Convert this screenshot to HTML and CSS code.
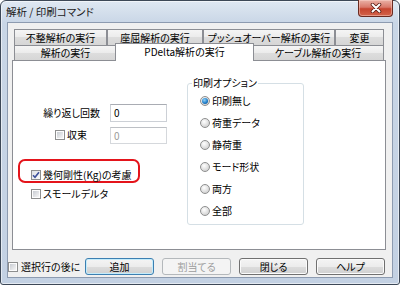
FILE: index.html
```html
<!DOCTYPE html>
<html lang="ja">
<head>
<meta charset="utf-8">
<title>解析 / 印刷コマンド</title>
<link rel="stylesheet" href="styles.css">
</head>
<body>
<div class="window">
  <div class="titlebar">
    <span class="title">解析 / 印刷コマンド</span>
    <div class="close">
      <svg width="14" height="10" viewBox="0 0 14 10">
        <path d="M3.5 1.5 L10.5 8.5 M10.5 1.5 L3.5 8.5" stroke="#5b1d14" stroke-width="3.6" stroke-linecap="round"/>
        <path d="M3.5 1.5 L10.5 8.5 M10.5 1.5 L3.5 8.5" stroke="#ffffff" stroke-width="2" stroke-linecap="round"/>
      </svg>
    </div>
  </div>
  <div class="client">
    <div class="tabctl">
      <div class="tabrow row1">
        <div class="tab t-fusei">不整解析の実行</div>
        <div class="tab t-zakutsu">座屈解析の実行</div>
        <div class="tab t-push">プッシュオーバー解析の実行</div>
        <div class="tab t-henko">変更</div>
      </div>
      <div class="tabrow row2">
        <div class="tab t-kaiseki">解析の実行</div>
        <div class="tab t-pdelta selected">PDelta解析の実行</div>
        <div class="tab t-cable">ケーブル解析の実行</div>
      </div>
      <div class="panel">
        <div class="leftcol">
          <div class="formrow">
            <span class="fieldlabel">繰り返し回数</span>
            <div class="tb">0</div>
          </div>
          <div class="formrow second">
            <span class="fieldlabel left">
              <span class="chk"><span class="cb"></span>収束</span>
            </span>
            <div class="tb disabled">0</div>
          </div>
          <div class="highlight">
            <span class="chk"><span class="cb checked"><svg width="8" height="8" viewBox="0 0 8 8"><path d="M1 4.2 L3 6.3 L7 1.2" fill="none" stroke="#3d519b" stroke-width="1.6"/></svg></span>幾何剛性(Kg)の考慮</span>
          </div>
          <div class="smallrow">
            <span class="chk"><span class="cb"></span>スモールデルタ</span>
          </div>
        </div>
        <div class="group">
          <span class="legend">印刷オプション</span>
          <div class="radios">
            <div class="radio"><span class="rb on"></span>印刷無し</div>
            <div class="radio"><span class="rb"></span>荷重データ</div>
            <div class="radio"><span class="rb"></span>静荷重</div>
            <div class="radio"><span class="rb"></span>モード形状</div>
            <div class="radio"><span class="rb"></span>両方</div>
            <div class="radio"><span class="rb"></span>全部</div>
          </div>
        </div>
      </div>
    </div>
    <div class="bottombar">
      <span class="chk after"><span class="cb"></span>選択行の後に</span>
      <div class="buttons">
        <div class="btn default">追加</div>
        <div class="btn disabled">割当てる</div>
        <div class="btn">閉じる</div>
        <div class="btn">ヘルプ</div>
      </div>
    </div>
  </div>
</div>
</body>
</html>
```

FILE: styles.css
```css
* { box-sizing: border-box; }
html, body { margin: 0; padding: 0; }
body {
  width: 400px;
  height: 285px;
  overflow: hidden;
  background: #ffffff;
  font-family: "Noto Sans CJK JP", "Noto Sans", sans-serif;
  font-size: 10px;
  line-height: 12px;
  color: #000;
  font-feature-settings: "palt";
}

.window {
  width: 400px;
  height: 285px;
  border: 1px solid #3d4857;
  border-radius: 6px 6px 3px 3px;
  background: linear-gradient(#dfe8f2, #c9d6e6 22px, #c3d1e3);
  box-shadow: inset 0 0 0 1px rgba(255,255,255,0.55);
  padding: 0 6px 6px 6px;
  display: flex;
  flex-direction: column;
}

.titlebar {
  height: 21px;
  display: flex;
  align-items: flex-start;
}
.title {
  margin-left: -1px;
  margin-top: 5px;
  font-size: 10.5px;
  line-height: 12px;
  color: #1a1a1a;
}
.close {
  margin-left: auto;
  margin-top: -1px;
  width: 35px;
  height: 17px;
  border: 1px solid #6a2a20;
  border-top: none;
  border-radius: 0 0 4px 4px;
  background: linear-gradient(#eab2a6, #d9796a 45%, #c6452f 55%, #d2634a);
  box-shadow: inset 0 0 0 1px rgba(255,220,210,0.45);
  display: flex;
  align-items: center;
  justify-content: center;
}

.client {
  flex: 1;
  border: 1px solid #8d9bb0;
  background: #f0f0f0;
  padding-top: 6px;
  display: flex;
  flex-direction: column;
}

.tabctl {
  margin-left: 4px;
  width: 374px;
}
.tabrow {
  display: flex;
  margin-left: 2px;
}
.tab {
  border: 1px solid #8c8e94;
  border-bottom: none;
  background: linear-gradient(#f5f5f5, #ebebeb 50%, #dddddd 50%, #d6d6d6);
  display: flex;
  align-items: center;
  justify-content: center;
  white-space: nowrap;
}
.row1 .tab { height: 16px; }
.row2 .tab { height: 15px; }
.t-fusei { width: 93px; }
.t-zakutsu { width: 96px; }
.t-push { width: 132px; }
.t-henko { width: 49px; }
.t-kaiseki { width: 103px; }
.t-pdelta { width: 135px; }
.t-cable { width: 132px; }
.tab.selected {
  width: 139px;
  height: 18px;
  margin: -2px -2px -1px -2px;
  background: #ffffff;
  position: relative;
  z-index: 1;
  padding-bottom: 2px;
}

.panel {
  height: 190px;
  border: 1px solid #8c8e94;
  background: #ffffff;
  display: flex;
}

.leftcol {
  width: 174px;
  padding-top: 43px;
}
.formrow {
  display: flex;
  align-items: center;
}
.formrow.second { margin-top: 5px; }
.fieldlabel {
  width: 97px;
  padding-right: 10px;
  text-align: right;
}
.fieldlabel.left {
  text-align: left;
  padding-left: 42px;
  padding-right: 0;
}
.tb {
  width: 57px;
  height: 18px;
  border: 1px solid #ccd0d6;
  border-top-color: #a9acb3;
  background: #ffffff;
  padding: 1px 3px;
  line-height: 14px;
}
.tb.disabled {
  height: 17px;
  color: #9a9a9a;
  border-color: #d5d8dc;
  border-top-color: #bdc0c5;
}

.chk {
  display: inline-flex;
  align-items: center;
  gap: 2px;
  white-space: nowrap;
}
.cb {
  width: 10px;
  height: 10px;
  border: 1px solid #8e8f8f;
  padding: 1px;
  background: linear-gradient(135deg, #c8ccd2, #f6f6f6) content-box, #fdfdfd;
  display: flex;
  align-items: center;
  justify-content: center;
  flex: none;
}
.cb.checked { padding: 0; background: linear-gradient(135deg, #dfe2e6, #fafafa); }

.highlight {
  margin-top: 15px;
  margin-left: 5px;
  width: 122px;
  height: 24px;
  border: 2px solid #e4141b;
  border-radius: 7px;
  padding: 8px 0 0 11px;
}
.smallrow {
  margin-top: 5px;
  margin-left: 18px;
  height: 12px;
  display: flex;
  align-items: center;
}

.group {
  margin-top: 22px;
  width: 117px;
  height: 142px;
  border: 1px solid #d5dfe5;
  border-radius: 3px;
  position: relative;
}
.legend {
  position: absolute;
  top: -7px;
  left: 4px;
  padding: 0 1px;
  background: #ffffff;
  white-space: nowrap;
}
.radios {
  padding: 6px 0 0 12px;
}
.radio {
  height: 22px;
  display: flex;
  align-items: center;
  gap: 2px;
}
.rb {
  width: 10px;
  height: 10px;
  border-radius: 50%;
  border: 1px solid #8e8f8f;
  background: radial-gradient(circle at 40% 35%, #ffffff, #d6d6d6 70%, #c4c4c4);
  display: flex;
  align-items: center;
  justify-content: center;
  flex: none;
}
.rb.on::after {
  content: "";
  width: 6px;
  height: 6px;
  border-radius: 50%;
  background: radial-gradient(circle at 40% 35%, #8fd3fb, #1b78c4 60%, #0b3f7a);
}

.bottombar {
  margin-top: 8px;
  height: 17px;
  display: flex;
  align-items: center;
}
.chk.after { gap: 3px; }
.buttons {
  margin-left: auto;
  margin-right: 7px;
  display: flex;
  gap: 8px;
}
.btn {
  width: 69px;
  height: 17px;
  border: 1px solid #707070;
  border-radius: 3px;
  background: linear-gradient(#f4f4f4, #ececec 50%, #dddddd 50%, #d0d0d0);
  box-shadow: inset 0 0 0 1px #fbfbfb;
  display: flex;
  align-items: center;
  justify-content: center;
}
.btn.default {
  border-color: #3c7fb1;
  box-shadow: inset 0 0 0 1px #c4ecfb;
}
.btn.disabled {
  border-color: #b4b8bb;
  background: #f4f4f4;
  box-shadow: none;
  color: #9c9c9c;
}
```
